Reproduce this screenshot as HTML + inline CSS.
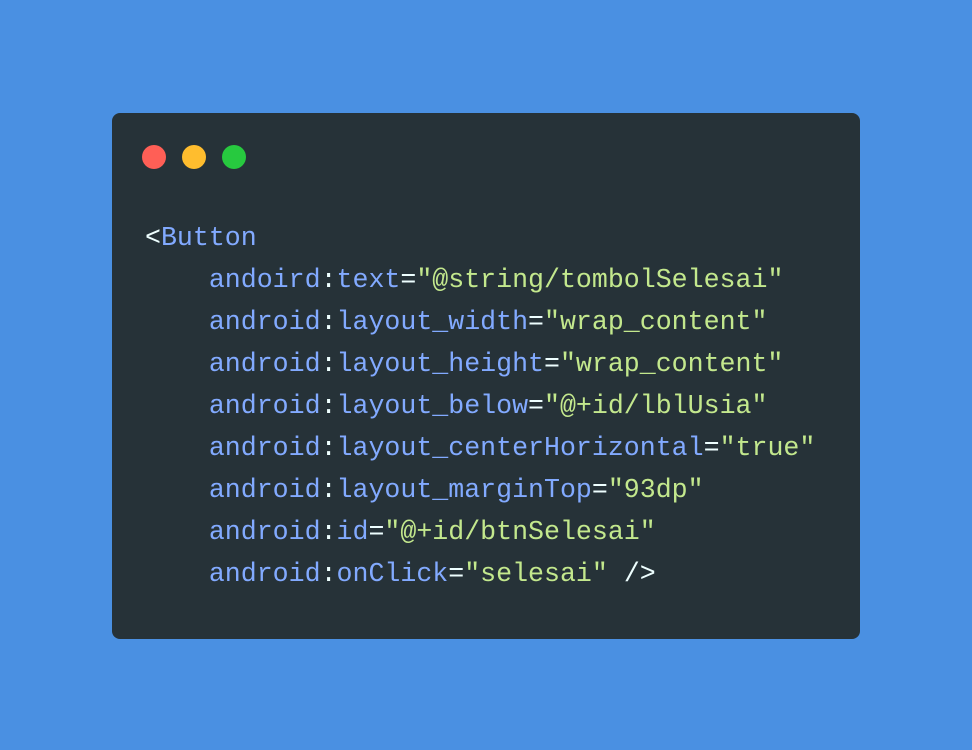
<!DOCTYPE html>
<html><head><meta charset="utf-8"><style>
html,body{margin:0;padding:0}
body{width:972px;height:750px;background:#4a90e2;position:relative;overflow:hidden}
.card{position:absolute;left:112px;top:113px;width:748px;height:526px;background:#263238;border-radius:8px}
.dot{position:absolute;top:145px;width:24px;height:24px;border-radius:50%}
pre{position:absolute;left:145px;top:217px;margin:0;font-family:"Liberation Mono",monospace;font-size:26.6px;line-height:42px;color:#eeffff}
.b{color:#82aaff}.g{color:#c3e88d}
</style></head><body>
<div class="card"></div>
<div class="dot" style="left:142px;background:#ff5f56"></div>
<div class="dot" style="left:182px;background:#ffbd2e"></div>
<div class="dot" style="left:222px;background:#27c93f"></div>
<pre>&lt;<span class="b">Button</span>
    <span class="b">andoird</span>:<span class="b">text</span>=<span class="g">"@string/tombolSelesai"</span>
    <span class="b">android</span>:<span class="b">layout_width</span>=<span class="g">"wrap_content"</span>
    <span class="b">android</span>:<span class="b">layout_height</span>=<span class="g">"wrap_content"</span>
    <span class="b">android</span>:<span class="b">layout_below</span>=<span class="g">"@+id/lblUsia"</span>
    <span class="b">android</span>:<span class="b">layout_centerHorizontal</span>=<span class="g">"true"</span>
    <span class="b">android</span>:<span class="b">layout_marginTop</span>=<span class="g">"93dp"</span>
    <span class="b">android</span>:<span class="b">id</span>=<span class="g">"@+id/btnSelesai"</span>
    <span class="b">android</span>:<span class="b">onClick</span>=<span class="g">"selesai"</span> /&gt;</pre>
</body></html>
